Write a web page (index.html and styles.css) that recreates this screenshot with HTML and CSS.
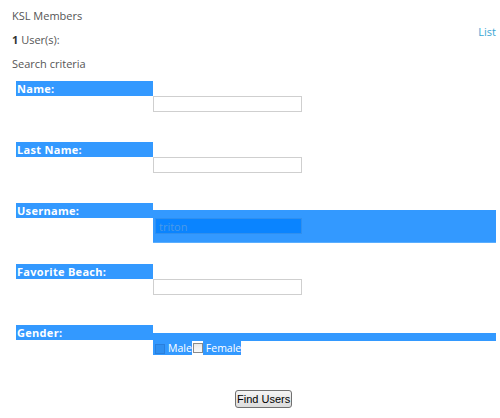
FILE: index.html
```html
<!DOCTYPE html>
<html lang="en">
<head>
    <meta charset="UTF-8">
    <title>KSL Members</title>
    <link rel="stylesheet" href="styles.css">
</head>
<body>
    <div class="header">
        <div class="intro">
            <div class="line">KSL Members</div>
            <div class="line"><b>1</b> User(s):</div>
            <div class="line">Search criteria</div>
        </div>
        <a class="list-link" href="#">List</a>
    </div>

    <form class="search">
        <div class="field">
            <div class="label">Name:</div>
            <div class="control"><input type="text"></div>
        </div>
        <div class="field">
            <div class="label">Last Name:</div>
            <div class="control"><input type="text"></div>
        </div>
        <div class="field">
            <div class="label">Username:</div>
            <div class="control selected"><input type="text" value="triton"></div>
        </div>
        <div class="field">
            <div class="label">Favorite Beach:</div>
            <div class="control"><input type="text"></div>
        </div>
        <div class="field">
            <div class="label">Gender:</div>
            <div class="control gender">
                <div class="bar"></div>
                <div class="checks">
                    <span class="sel"><span class="box box-sel"></span>Male</span><span class="box"></span><span class="sel female">Female</span>
                </div>
            </div>
        </div>
        <div class="actions">
            <button type="button">Find Users</button>
        </div>
    </form>
</body>
</html>
```

FILE: styles.css
```css
body {
    margin: 0;
    font-family: "Open Sans", Arial, sans-serif;
    font-size: 11px;
    color: #555;
    background: #fff;
}
.header {
    display: flex;
    justify-content: space-between;
    padding: 4px 4px 0 12px;
}
.line {
    height: 24px;
    line-height: 24px;
}
.line b {
    color: #333;
}
.list-link {
    padding-top: 20px;
    color: #3aa6d4;
    text-decoration: none;
}
.search {
    margin-top: 5px;
}
.field {
    height: 61px;
}
.label {
    margin-left: 16px;
    width: 136px;
    height: 15px;
    line-height: 15px;
    padding-left: 1px;
    background: #3399ff;
    color: #fff;
    font-weight: bold;
    letter-spacing: 0.3px;
}
.control {
    margin-left: 153px;
    height: 16px;
}
.control input {
    display: block;
    box-sizing: border-box;
    width: 149px;
    height: 16px;
    margin: 0;
    padding: 0 3px;
    border: 1px solid #cfcfcf;
    font-family: "Open Sans", Arial, sans-serif;
    font-size: 11px;
}
.control.selected {
    height: auto;
    margin-top: -8px;
    margin-right: 4px;
    padding: 8px 0 8px 2px;
    background: #3399ff;
    border-bottom: 1px solid #5aaeff;
}
.control.selected input {
    width: 147px;
    background: #0a84ff;
    border-color: #2f8fef;
    color: #4a9ae8;
}
.control.gender {
    height: auto;
    margin-top: -7px;
}
.bar {
    height: 8px;
    margin-right: 4px;
    background: #3399ff;
}
.checks {
    display: flex;
    height: 14px;
    line-height: 14px;
    font-size: 10.5px;
    color: #fff;
}
.sel {
    display: inline-flex;
    align-items: center;
    background: #3399ff;
}
.female {
    padding-left: 3px;
}
.box {
    display: inline-block;
    box-sizing: border-box;
    width: 10px;
    height: 10px;
    margin: 1px 3px 0 2px;
    border: 1px solid #8a8a8a;
    background: linear-gradient(#e8e8e8, #fafafa);
}
.checks > .box {
    margin: 0 0 0 1px;
    align-self: center;
}
.box.box-sel {
    border-color: #2a7fdc;
    background: #2f8ff0;
}
.actions {
    margin-top: 4px;
    padding-left: 235px;
}
.actions button {
    height: 18px;
    padding: 0 1px;
    white-space: nowrap;
    border: 1px solid #707070;
    border-radius: 3px;
    background: linear-gradient(#f4f4f4, #dcdcdc);
    font-family: Arial, "Liberation Sans", sans-serif;
    font-size: 11px;
    color: #000;
}
```
